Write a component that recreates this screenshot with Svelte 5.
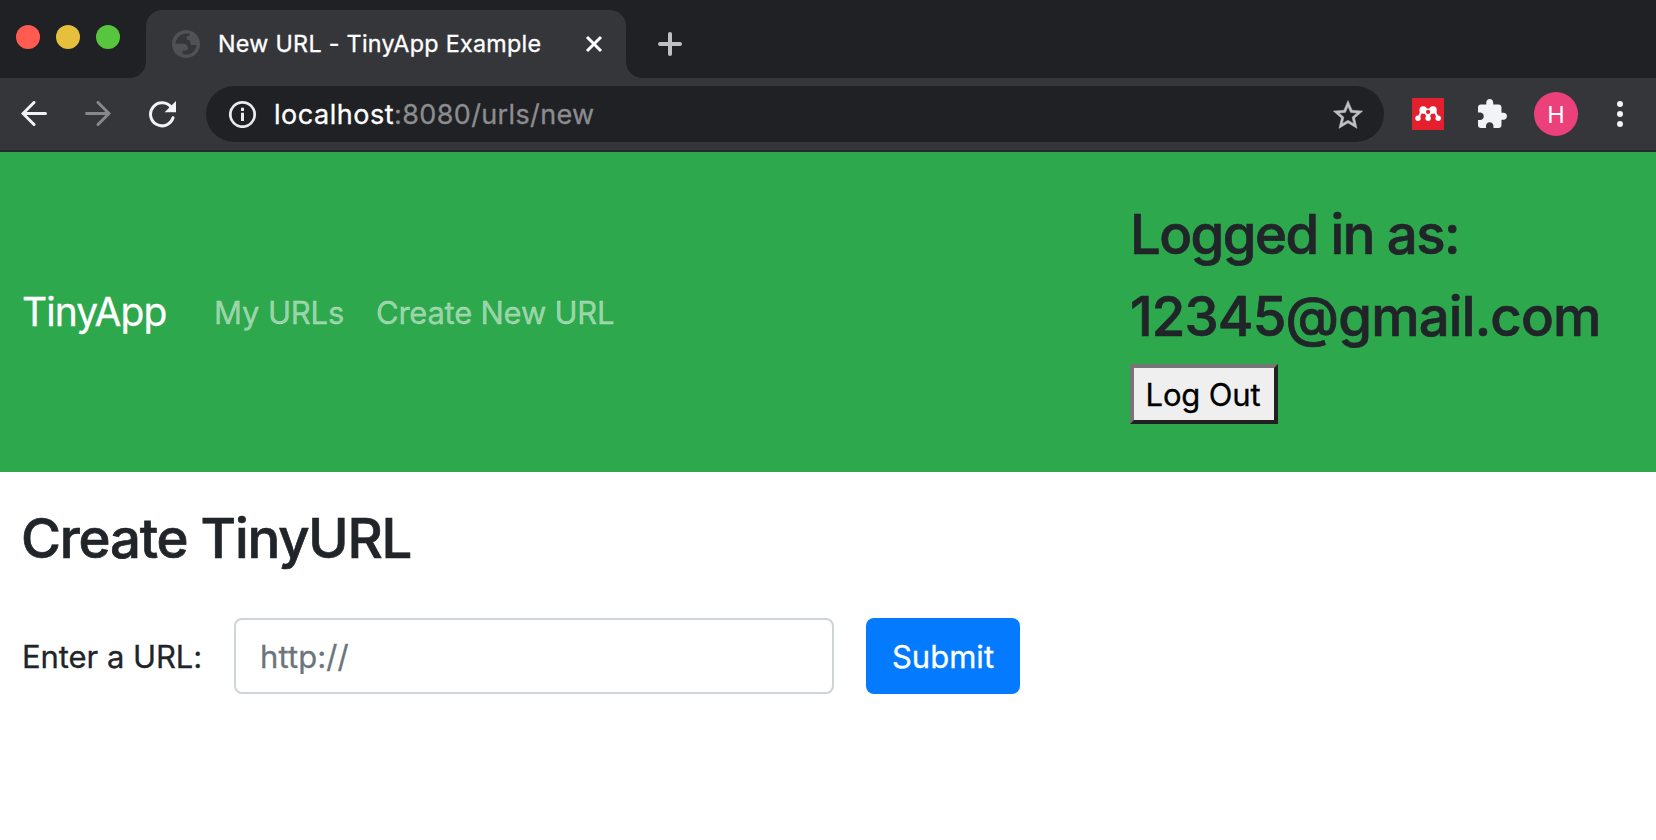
<script>
  let url = $state('');
  const lights = ['#ff5b51', '#e6c03c', '#58c53f'];
  const links = [
    { label: 'My URLs', cls: 'urls' },
    { label: 'Create New URL', cls: 'create' }
  ];
</script>

<div class="window">
  <header class="tabs">
    <div class="lights">
      {#each lights as color}<i style:background={color}></i>{/each}
    </div>
    <div class="tab">
      <svg class="globe" viewBox="0 0 28 28" width="28" height="28">
        <circle cx="14" cy="14" r="14" fill="#505155" />
        <path fill="#35363a" d="M3.500 13.800C4 9 7.500 4.600 12.500 3.700c2-.4 4.200-.2 5.300.2.2 1.600-.8 2-2 2.200-1.300.3-1.200 1.300-1.200 2.200 0 1.200.8 1.400 1.800 1.500 1.700.2 1.500 1.600 1.600 2.900.1 1.600 1.200 2.300 2.600 2.300h3.900c-.3 4.500-3.500 8.200-7.500 9.200-2.200.5-4.500.4-6.400-.3v-2.100c0-1 .5-1.300 1.600-1.300h1.500c1.600 0 2.300-.8 2.300-2.300 0-2.500-2-4.400-5-4.400z" />
      </svg>
      <span class="title">New URL - TinyApp Example</span>
      <svg viewBox="0 0 18 18" width="18" height="18"><path d="M2 2l14 14M16 2L2 16" stroke="#fff" stroke-width="3" /></svg>
    </div>
    <svg class="plus" viewBox="0 0 24 24" width="24" height="24"><path d="M12 2v20M2 12h20" stroke="#bdc1c6" stroke-width="4" stroke-linecap="round" /></svg>
  </header>

  <div class="toolbar">
    <svg class="back" viewBox="0 0 26 26" width="26" height="26"><path d="M24.500 12.500H2.500M13 1.500L2 12.500l11 11" fill="none" stroke="#f1f3f4" stroke-width="3" stroke-linecap="round" /></svg>
    <svg class="forward" viewBox="0 0 26 26" width="26" height="26"><path d="M1.500 12.500h22M13 1.500l11 11-11 11" fill="none" stroke="#87888a" stroke-width="3" stroke-linecap="round" /></svg>
    <svg class="reload" viewBox="0 0 28 28" width="28" height="28"><path d="M23.300 7.500A11.500 11.500 0 1 0 25 17.800" fill="none" stroke="#f1f3f4" stroke-width="3" stroke-linecap="round" /><path d="M28 1v11.300H16.600z" fill="#f1f3f4" /></svg>
    <div class="address">
      <svg class="info" viewBox="0 0 28 28" width="28" height="28"><circle cx="13.500" cy="14.500" r="12.200" fill="none" stroke="#e8eaed" stroke-width="2.800" /><path d="M13.500 7.800V11M13.500 12.800v8.200" stroke="#e8eaed" stroke-width="3" /></svg>
      <span class="location"><b>localhost</b><span>:8080/urls/new</span></span>
      <svg class="star" viewBox="1.800 1.800 20.400 19.500" width="30" height="29"><path fill="#bdc1c6" stroke="#bdc1c6" stroke-width=".3" d="M22 9.240l-7.190-.620L12 2 9.190 8.630 2 9.240l5.460 4.730L5.820 21 12 17.270 18.180 21l-1.630-7.030L22 9.240zM12 15.400l-3.760 2.270 1-4.280-3.320-2.880 4.380-.380L12 6.100l1.710 4.040 4.380.380-3.320 2.880 1 4.280L12 15.400z" /></svg>
    </div>
    <svg class="mendeley" viewBox="0 0 32 32" width="32" height="32">
      <path fill="#e5202e" d="M0 0h32v32H0z" />
      <path d="M9.500 13L6.500 20M13.500 14.500l2.600 5 2.600-5M22.800 13l3 7" fill="none" stroke="#fff" stroke-width="2" />
      <g fill="#fff"><circle cx="11.200" cy="12" r="3.800" /><circle cx="21" cy="12" r="3.800" /><circle cx="16.100" cy="14" r="3.600" /><circle cx="6" cy="20.300" r="2.700" /><circle cx="16.100" cy="20.300" r="2.700" /><circle cx="26.200" cy="20.300" r="2.700" /></g>
      <circle cx="16.100" cy="13.900" r="2.100" fill="#e5202e" />
    </svg>
    <svg class="puzzle" viewBox="2 1 21 21" width="29" height="29"><path fill="#f1f3f4" d="M20.500 11H19V7c0-1.100-.9-2-2-2h-4V3.500C13 2.120 11.880 1 10.500 1S8 2.120 8 3.500V5H4c-1.100 0-1.990.9-1.990 2v3.800H3.500c1.490 0 2.700 1.210 2.700 2.700s-1.210 2.700-2.700 2.700H2V20c0 1.100.9 2 2 2h3.800v-1.500c0-1.490 1.210-2.700 2.700-2.700 1.490 0 2.700 1.210 2.700 2.700V22H17c1.100 0 2-.9 2-2v-4h1.500c1.380 0 2.500-1.120 2.500-2.500S21.880 11 20.500 11z" /></svg>
    <div class="avatar">H</div>
    <svg class="dots" viewBox="0 0 6 26" width="6" height="26" fill="#f1f3f4"><circle cx="3" cy="3" r="3" /><circle cx="3" cy="13" r="3" /><circle cx="3" cy="23" r="3" /></svg>
  </div>

  <nav>
    <a class="brand" href="#top">TinyApp</a>
    {#each links as link}<a class={link.cls} href="#top">{link.label}</a>{/each}
    <div class="account">
      <h3 class="logged">Logged in as:</h3>
      <h3 class="email">12345@gmail.com</h3>
      <button class="logout">Log Out</button>
    </div>
  </nav>

  <main>
    <h3>Create TinyURL</h3>
    <form onsubmit={(e) => e.preventDefault()}>
      <label for="url">Enter a URL:</label>
      <input id="url" type="text" placeholder="http://" bind:value={url} />
      <button class="submit">Submit</button>
    </form>
  </main>
</div>

<style>
  :global(body) { background: #fff; overflow: hidden; }
  .window { width: 1656px; height: 840px; overflow: hidden; font-family: Inter, sans-serif; color: #212529; -webkit-text-stroke: .3px; }
  .window * { box-sizing: border-box; }
  svg { display: block; flex: none; }
  h3 { margin: 0; font-size: 54.5px; font-weight: 500; white-space: nowrap; -webkit-text-stroke: .7px; }
  a { text-decoration: none; white-space: nowrap; }

  .tabs { height: 78px; background: #202124; display: flex; align-items: flex-start; }
  .lights { display: flex; gap: 16px; padding: 25px 0 0 16px; width: 146px; }
  .lights i { width: 24px; height: 24px; border-radius: 50%; }
  .tab { position: relative; width: 480px; height: 68px; margin-top: 10px; background: #35363a; border-radius: 16px 16px 0 0; display: flex; align-items: center; padding-left: 26px; }
  .tab::before, .tab::after { content: ''; position: absolute; bottom: 0; width: 16px; height: 16px; }
  .tab::before { left: -16px; background: radial-gradient(circle at 0 0, transparent 15.500px, #35363a 16.200px); }
  .tab::after { right: -16px; background: radial-gradient(circle at 100% 0, transparent 15.500px, #35363a 16.200px); }
  .title { margin: 0 0 1px 18px; width: 367px; font-size: 23.300px; letter-spacing: .290px; color: #fff; white-space: nowrap; }
  .plus { margin: 32px 0 0 32px; }

  .toolbar { height: 74px; padding-bottom: 2px; background: #35363a; box-shadow: inset 0 -2px #28292c; display: flex; align-items: center; }
  .back { margin-left: 21px; }
  .forward { margin-left: 38px; }
  .reload { margin-left: 37px; }
  .address { width: 1178px; height: 56px; margin-left: 30px; border-radius: 28px; background: #202124; display: flex; align-items: center; padding: 0 21px 0 23px; }
  .location { margin-left: 17px; flex: 1; font-size: 27px; color: #8c8d90; letter-spacing: .370px; white-space: nowrap; }
  .location b { font-weight: 400; color: #fff; letter-spacing: .520px; }
  .mendeley { margin-left: 28px; }
  .puzzle { margin: 0 0 1px 34px; }
  .avatar { width: 44px; height: 44px; margin-left: 27px; border-radius: 50%; background: #ec407a; color: #fff; display: flex; align-items: center; justify-content: center; font-size: 23.500px; -webkit-text-stroke: 0; }
  .dots { margin-left: 39px; }

  nav { height: 320px; background: #2da84c; display: flex; align-items: center; padding-left: 22px; }
  .brand { width: 192px; padding-bottom: 1px; color: #fff; font-size: 39px; letter-spacing: -.950px; }
  .urls, .create { color: rgba(255, 255, 255, .52); font-size: 31px; }
  .urls { width: 162px; letter-spacing: -.140px; }
  .create { width: 754px; letter-spacing: -.245px; }
  .account { display: flex; flex-direction: column; align-items: flex-start; }
  .account h3 { height: 82px; line-height: 68px; }
  .logged { letter-spacing: -1.571px; }
  .email { letter-spacing: -.847px; }
  .logout { width: 148px; height: 60px; padding: 0 2px 0 0; border: 4px solid; border-color: #767676 #212121 #212121 #767676; background: #efefef; color: #000; font: 31px Inter, sans-serif; letter-spacing: -.147px; -webkit-text-stroke: .3px; }

  main { padding: 33px 21px; }
  main h3 { line-height: 66px; letter-spacing: -1.216px; }
  form { margin-top: 47px; display: flex; align-items: center; }
  label { width: 213px; padding-left: 1px; font-size: 31px; letter-spacing: -.060px; white-space: nowrap; }
  input { width: 600px; height: 76px; padding: 0 24px; border: 2px solid #ced4da; border-radius: 8px; font: 31px Inter, sans-serif; letter-spacing: .093px; color: #495057; }
  input::placeholder { color: #6c757d; opacity: 1; }
  .submit { width: 154px; height: 76px; margin-left: 32px; padding: 0; border: 0; border-radius: 8px; background: #047bfe; color: #fff; font: 31px Inter, sans-serif; letter-spacing: .027px; -webkit-text-stroke: .3px; }
</style>
